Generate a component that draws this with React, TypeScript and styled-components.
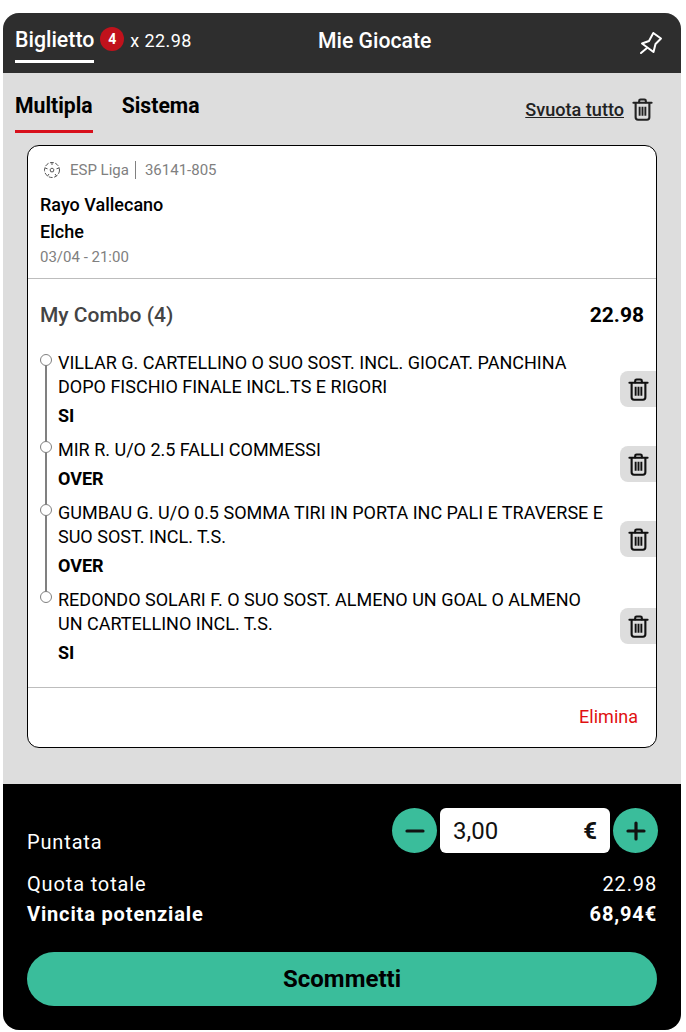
import * as React from 'react';
import styled, { createGlobalStyle } from 'styled-components';

const GlobalStyle = createGlobalStyle`
  html, body {
    margin: 0;
    padding: 0;
    background: #fff;
  }
  body {
    font-family: Roboto, "Liberation Sans", sans-serif;
    color: #000;
  }
  * {
    box-sizing: border-box;
  }
`;

const selections = [
  {
    id: 1,
    title: ['VILLAR G. CARTELLINO O SUO SOST. INCL. GIOCAT. PANCHINA', 'DOPO FISCHIO FINALE INCL.TS E RIGORI'],
    pick: 'SI',
  },
  { id: 2, title: ['MIR R. U/O 2.5 FALLI COMMESSI'], pick: 'OVER' },
  {
    id: 3,
    title: ['GUMBAU G. U/O 0.5 SOMMA TIRI IN PORTA INC PALI E TRAVERSE E', 'SUO SOST. INCL. T.S.'],
    pick: 'OVER',
  },
  {
    id: 4,
    title: ['REDONDO SOLARI F. O SUO SOST. ALMENO UN GOAL O ALMENO', 'UN CARTELLINO INCL. T.S.'],
    pick: 'SI',
  },
];

const Page = styled.div`
  width: 686px;
  height: 1032px;
  padding: 13px 5px 2px 3px;
`;

const Panel = styled.div`
  height: 1017px;
  border-radius: 16px;
  overflow: hidden;
  display: flex;
  flex-direction: column;
  background: #ddd;
`;

const Header = styled.header`
  position: relative;
  height: 60px;
  flex: none;
  background: #2e2e2e;
  color: #fff;
  display: flex;
  justify-content: space-between;
  padding: 0 18px 0 12px;
`;

const TicketTab = styled.div`
  display: flex;
  align-items: center;
  height: 50px;
`;

const TicketLabel = styled.span`
  height: 50px;
  line-height: 54px;
  font-size: 21.33px;
  font-weight: 500;
  border-bottom: 3px solid #fff;
`;

const CountBadge = styled.span`
  width: 24px;
  height: 24px;
  margin: 1px 6px 0 6px;
  border-radius: 50%;
  background: #c1121c;
  font-size: 14px;
  font-weight: 700;
  line-height: 24px;
  text-align: center;
`;

const Odds = styled.span`
  font-size: 18px;
  margin-top: 4px;
  letter-spacing: 0.4px;
`;

const HeaderTitle = styled.div`
  position: absolute;
  left: 315px;
  top: 15px;
  font-size: 21.2px;
  font-weight: 500;
  line-height: 26px;
`;

const PinButton = styled.div`
  display: flex;
  align-items: flex-start;
  padding-top: 18px;
`;

const Body = styled.main`
  flex: 1;
  padding: 0 24px 36px;
  display: flex;
  flex-direction: column;
`;

const TabsRow = styled.div`
  height: 72px;
  margin: 0 0 0 -12px;
  display: flex;
  justify-content: space-between;
`;

const Tabs = styled.div`
  display: flex;
  gap: 29px;
`;

const Tab = styled.div<{ $active?: boolean }>`
  height: 60px;
  padding-top: 20px;
  font-size: 21.2px;
  font-weight: 700;
  line-height: 26px;
  border-bottom: 3px solid ${(p) => (p.$active ? '#d8101c' : 'transparent')};
`;

const ClearAll = styled.div`
  display: flex;
  align-items: center;
  gap: 8px;
  height: 72px;
  padding-right: 4px;
  font-size: 18.1px;
  font-weight: 500;
  color: #222;
  text-decoration: underline;
`;

const Card = styled.section`
  flex: 1;
  background: #fff;
  border: 1px solid #000;
  border-radius: 12px;
  display: flex;
  flex-direction: column;
`;

const EventInfo = styled.div`
  height: 133px;
  flex: none;
  padding: 13px 12px 0;
  border-bottom: 1px solid #bdbdbd;
`;

const League = styled.div`
  display: flex;
  align-items: center;
  height: 22px;
  padding-left: 3px;
  font-size: 15px;
  color: #808080;
`;

const LeagueName = styled.span`
  margin-left: 9px;
  padding-right: 6px;
  border-right: 1px solid #808080;
  line-height: 18px;
`;

const EventCode = styled.span`
  margin-left: 9px;
`;

const TeamName = styled.div`
  font-size: 18px;
  font-weight: 500;
  line-height: 26.5px;
  &:nth-of-type(2) {
    margin-top: 11px;
  }
`;

const EventDate = styled.div`
  font-size: 15px;
  line-height: 24px;
  color: #808080;
`;

const ComboHead = styled.div`
  display: flex;
  justify-content: space-between;
  align-items: center;
  height: 72px;
  padding: 0 12px;
`;

const ComboName = styled.span`
  font-size: 21px;
  font-weight: 500;
  color: #444;
`;

const ComboOdds = styled.span`
  font-size: 21px;
  font-weight: 700;
`;

const SelectionList = styled.div`
  position: relative;
  display: flex;
  flex-direction: column;
  gap: 10px;
`;

const TimelineRail = styled.div`
  position: absolute;
  left: 17px;
  top: 9px;
  width: 2px;
  height: 237px;
  background: #808080;
`;

const SelectionRow = styled.div`
  position: relative;
  display: flex;
  align-items: center;
  justify-content: space-between;
  padding-left: 30px;
`;

const TimelineDot = styled.span`
  position: absolute;
  left: 12px;
  top: 3px;
  width: 12px;
  height: 12px;
  border: 1px solid #808080;
  border-radius: 50%;
  background: #fff;
`;

const SelectionText = styled.div`
  font-size: 18px;
  line-height: 24px;
  color: #000;
  white-space: nowrap;
`;

const Pick = styled.div`
  margin-top: 5px;
  font-weight: 700;
`;

const RemoveButton = styled.div`
  width: 36px;
  height: 36px;
  flex: none;
  margin-top: -1px;
  border-radius: 8px 0 0 8px;
  background: #ddd;
  display: flex;
  align-items: center;
  justify-content: center;
`;

const CardFooter = styled.div`
  margin-top: 22px;
  flex: 1;
  border-top: 1px solid #bdbdbd;
  display: flex;
  align-items: center;
  justify-content: flex-end;
  padding: 0 18px 2px;
  font-size: 18px;
  color: #e01010;
`;

const Footer = styled.footer`
  height: 246px;
  flex: none;
  background: #000;
  color: #fff;
  padding: 24px 24px 0;
`;

const StakeRow = styled.div`
  display: flex;
  justify-content: space-between;
  height: 61px;
`;

const StakeLabel = styled.div`
  font-size: 20px;
  letter-spacing: 0.85px;
  padding-top: 22px;
`;

const StakeControl = styled.div`
  display: flex;
  align-items: flex-start;
  gap: 3px;
  margin-right: -1px;
`;

const RoundButton = styled.div`
  width: 45px;
  height: 45px;
  border-radius: 50%;
  background: #3abd9b;
  display: flex;
  align-items: center;
  justify-content: center;
`;

const StakeInput = styled.div`
  width: 170px;
  height: 45px;
  border-radius: 6px;
  background: #fff;
  color: #111;
  display: flex;
  align-items: center;
  justify-content: space-between;
  padding: 0 13px;
  font-size: 24px;
`;

const Euro = styled.span`
  font-size: 24px;
  font-weight: 700;
`;

const SummaryRow = styled.div`
  display: flex;
  justify-content: space-between;
  height: 30px;
  line-height: 30px;
  font-size: 20px;
  letter-spacing: 0.85px;
`;

const StrongRow = styled(SummaryRow)`
  font-weight: 700;
`;

const BetButton = styled.div`
  margin-top: 23px;
  height: 54px;
  border-radius: 27px;
  background: #3abd9b;
  color: #000;
  font-size: 24px;
  font-weight: 700;
  line-height: 54px;
  text-align: center;
`;

const TrashIcon = ({ color = '#111' }: { color?: string }) => (
  <svg width="21" height="23" viewBox="0 0 22 24" fill="none" stroke={color} strokeWidth="2.200" strokeLinecap="round">
    <path d="M1.500 5h19" />
    <path d="M7.500 4.500V3c0-.9.6-1.500 1.500-1.500h4c.9 0 1.500.6 1.500 1.500v1.500" />
    <path d="M3.800 5.500v14.700c0 1.500 1 2.500 2.500 2.500h9.400c1.500 0 2.500-1 2.500-2.500V5.500" />
    <path d="M8 9v9.500M11 9v9.500M14 9v9.500" strokeWidth="2" strokeLinecap="butt" />
  </svg>
);

const PinIcon = () => (
  <svg width="24" height="24" viewBox="0 0 24 24" fill="none" stroke="#fff" strokeWidth="2" strokeLinejoin="round" strokeLinecap="round">
    <path d="M14.300 2 22 7.500 16.500 13 14.500 21 3 12.500 10 10Z" />
    <path d="M8 17 2 22" />
  </svg>
);

const BallIcon = () => (
  <svg width="18" height="18" viewBox="0 0 18 18" fill="none" stroke="#555" strokeWidth="1">
    <circle cx="9" cy="9" r="7.500" strokeDasharray="4 1.500" />
    <path d="M9 7 11 8.500 10.200 10.800H7.800L7 8.500Z" />
    <path d="M9 1.500V4M16 7 13.500 7.800M13.500 15 12 13M4.500 15 6 13M2 7 4.500 7.800" />
  </svg>
);

const MinusIcon = () => (
  <svg width="20" height="20" viewBox="0 0 20 20" stroke="#111" strokeWidth="3.200" strokeLinecap="round">
    <path d="M2 10h16" />
  </svg>
);

const PlusIcon = () => (
  <svg width="20" height="20" viewBox="0 0 20 20" stroke="#111" strokeWidth="3.200" strokeLinecap="round">
    <path d="M2 10h16M10 2v16" />
  </svg>
);

const App = () => (
  <Page>
    <GlobalStyle />
    <Panel>
      <Header>
        <TicketTab>
          <TicketLabel>Biglietto</TicketLabel>
          <CountBadge>4</CountBadge>
          <Odds>x 22.98</Odds>
        </TicketTab>
        <HeaderTitle>Mie Giocate</HeaderTitle>
        <PinButton>
          <PinIcon />
        </PinButton>
      </Header>
      <Body>
        <TabsRow>
          <Tabs>
            <Tab $active>Multipla</Tab>
            <Tab>Sistema</Tab>
          </Tabs>
          <ClearAll>
            Svuota tutto
            <TrashIcon color="#222" />
          </ClearAll>
        </TabsRow>
        <Card>
          <EventInfo>
            <League>
              <BallIcon />
              <LeagueName>ESP Liga</LeagueName>
              <EventCode>36141-805</EventCode>
            </League>
            <TeamName>Rayo Vallecano</TeamName>
            <TeamName>Elche</TeamName>
            <EventDate>03/04 - 21:00</EventDate>
          </EventInfo>
          <ComboHead>
            <ComboName>My Combo (4)</ComboName>
            <ComboOdds>22.98</ComboOdds>
          </ComboHead>
          <SelectionList>
            <TimelineRail />
            {selections.map((s) => (
              <SelectionRow key={s.id}>
                <TimelineDot />
                <SelectionText>
                  {s.title.map((line) => (
                    <div key={line}>{line}</div>
                  ))}
                  <Pick>{s.pick}</Pick>
                </SelectionText>
                <RemoveButton>
                  <TrashIcon />
                </RemoveButton>
              </SelectionRow>
            ))}
          </SelectionList>
          <CardFooter>Elimina</CardFooter>
        </Card>
      </Body>
      <Footer>
        <StakeRow>
          <StakeLabel>Puntata</StakeLabel>
          <StakeControl>
            <RoundButton>
              <MinusIcon />
            </RoundButton>
            <StakeInput>
              3,00
              <Euro>€</Euro>
            </StakeInput>
            <RoundButton>
              <PlusIcon />
            </RoundButton>
          </StakeControl>
        </StakeRow>
        <SummaryRow>
          <span>Quota totale</span>
          <span>22.98</span>
        </SummaryRow>
        <StrongRow>
          <span>Vincita potenziale</span>
          <span>68,94€</span>
        </StrongRow>
        <BetButton>Scommetti</BetButton>
      </Footer>
    </Panel>
  </Page>
);

export default App;
